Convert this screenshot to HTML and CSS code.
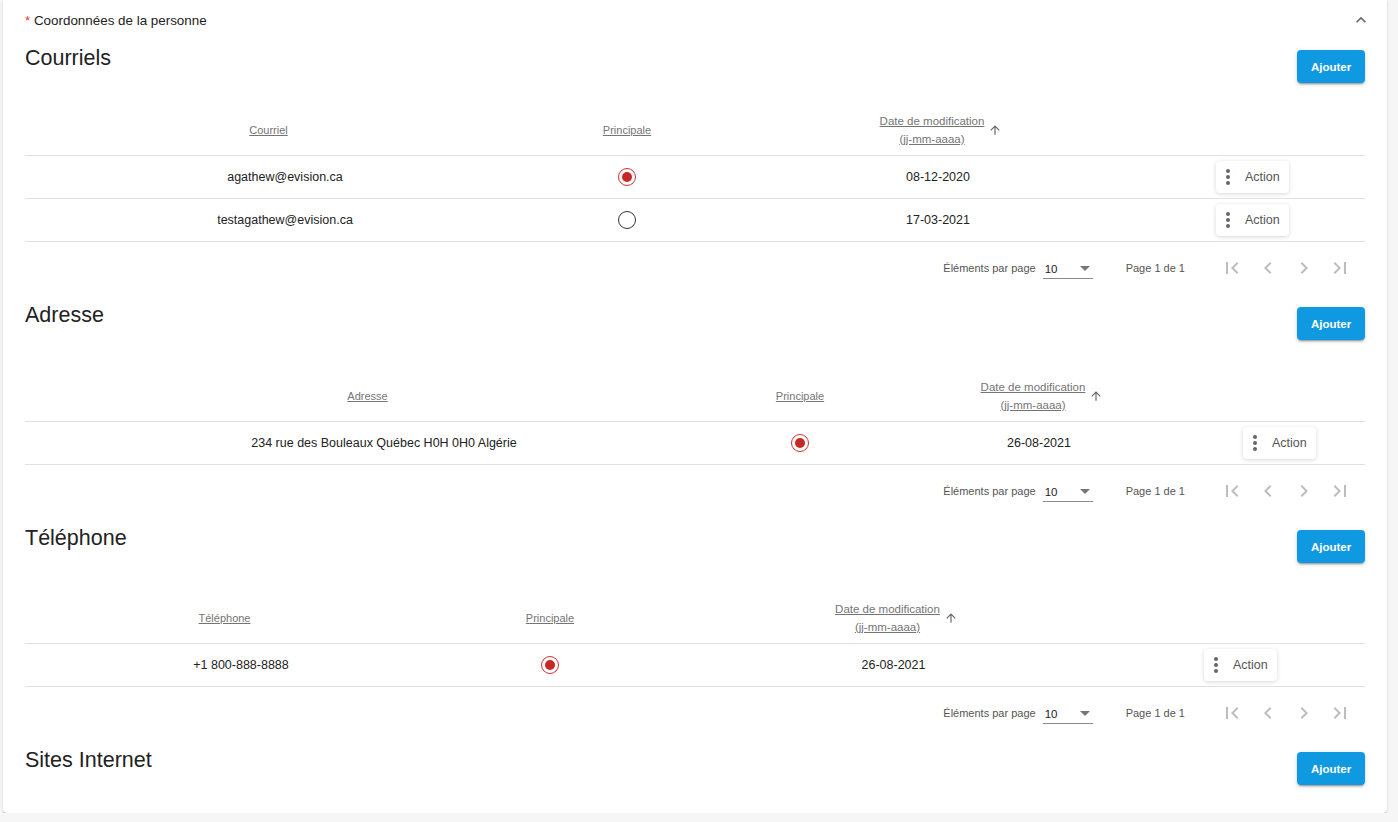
FILE: index.html
```html
<!DOCTYPE html>
<html lang="fr">
<head>
    <meta charset="UTF-8">
    <title>Coordonnées de la personne</title>
    <link rel="stylesheet" href="styles.css">
</head>
<body>

<div class="card">
    <!-- En-tête du panneau -->
    <div class="card-top">
        <span class="card-title"><span class="req">*</span> Coordonnées de la personne</span>
        <svg class="collapse-icon" viewBox="0 0 24 24"><path d="M12 8l-6 6 1.41 1.41L12 10.83l4.59 4.58L18 14z"/></svg>
    </div>

    <!-- Courriels -->
    <section class="section">
        <div class="section-head">
            <h2>Courriels</h2>
            <button class="btn-add">Ajouter</button>
        </div>
        <div class="tbl tbl-mail">
            <div class="tr th-row">
                <div class="th th-first"><span class="th-label">Courriel</span></div>
                <div class="th"><span class="th-label">Principale</span></div>
                <div class="th th-date">
                    <span class="th-label">Date de modification<br>(jj-mm-aaaa)</span>
                    <svg class="sort-icon" viewBox="0 0 24 24"><path d="M4 12l1.41 1.41L11 7.83V20h2V7.83l5.58 5.59L20 12l-8-8-8 8z"/></svg>
                </div>
                <div class="th"></div>
            </div>
            <div class="tr">
                <div class="td">agathew@evision.ca</div>
                <div class="td"><span class="radio checked"></span></div>
                <div class="td">08-12-2020</div>
                <div class="td td-action">
                    <button class="btn-action"><svg viewBox="0 0 24 24"><circle cx="12" cy="6" r="2"/><circle cx="12" cy="12" r="2"/><circle cx="12" cy="18" r="2"/></svg>Action</button>
                </div>
            </div>
            <div class="tr">
                <div class="td">testagathew@evision.ca</div>
                <div class="td"><span class="radio"></span></div>
                <div class="td">17-03-2021</div>
                <div class="td td-action">
                    <button class="btn-action"><svg viewBox="0 0 24 24"><circle cx="12" cy="6" r="2"/><circle cx="12" cy="12" r="2"/><circle cx="12" cy="18" r="2"/></svg>Action</button>
                </div>
            </div>
        </div>
        <div class="paginator">
            <span class="pg-label">Éléments par page</span>
            <div class="pg-select"><span>10</span><span class="caret"></span></div>
            <span class="pg-range">Page 1 de 1</span>
            <button class="pg-btn"><svg viewBox="0 0 24 24"><path d="M18.41 16.59L13.82 12l4.59-4.59L17 6l-6 6 6 6zM6 6h2v12H6z"/></svg></button>
            <button class="pg-btn"><svg viewBox="0 0 24 24"><path d="M15.41 7.41L14 6l-6 6 6 6 1.41-1.41L10.83 12z"/></svg></button>
            <button class="pg-btn"><svg viewBox="0 0 24 24"><path d="M10 6L8.59 7.41 13.17 12l-4.58 4.59L10 18l6-6z"/></svg></button>
            <button class="pg-btn"><svg viewBox="0 0 24 24"><path d="M5.59 7.41L10.18 12l-4.59 4.59L7 18l6-6-6-6zM16 6h2v12h-2z"/></svg></button>
        </div>
    </section>

    <!-- Adresse -->
    <section class="section">
        <div class="section-head">
            <h2>Adresse</h2>
            <button class="btn-add">Ajouter</button>
        </div>
        <div class="tbl tbl-addr">
            <div class="tr th-row">
                <div class="th th-first"><span class="th-label">Adresse</span></div>
                <div class="th"><span class="th-label">Principale</span></div>
                <div class="th th-date">
                    <span class="th-label">Date de modification<br>(jj-mm-aaaa)</span>
                    <svg class="sort-icon" viewBox="0 0 24 24"><path d="M4 12l1.41 1.41L11 7.83V20h2V7.83l5.58 5.59L20 12l-8-8-8 8z"/></svg>
                </div>
                <div class="th"></div>
            </div>
            <div class="tr">
                <div class="td">234 rue des Bouleaux Québec H0H 0H0 Algérie</div>
                <div class="td"><span class="radio checked"></span></div>
                <div class="td">26-08-2021</div>
                <div class="td td-action">
                    <button class="btn-action"><svg viewBox="0 0 24 24"><circle cx="12" cy="6" r="2"/><circle cx="12" cy="12" r="2"/><circle cx="12" cy="18" r="2"/></svg>Action</button>
                </div>
            </div>
        </div>
        <div class="paginator">
            <span class="pg-label">Éléments par page</span>
            <div class="pg-select"><span>10</span><span class="caret"></span></div>
            <span class="pg-range">Page 1 de 1</span>
            <button class="pg-btn"><svg viewBox="0 0 24 24"><path d="M18.41 16.59L13.82 12l4.59-4.59L17 6l-6 6 6 6zM6 6h2v12H6z"/></svg></button>
            <button class="pg-btn"><svg viewBox="0 0 24 24"><path d="M15.41 7.41L14 6l-6 6 6 6 1.41-1.41L10.83 12z"/></svg></button>
            <button class="pg-btn"><svg viewBox="0 0 24 24"><path d="M10 6L8.59 7.41 13.17 12l-4.58 4.59L10 18l6-6z"/></svg></button>
            <button class="pg-btn"><svg viewBox="0 0 24 24"><path d="M5.59 7.41L10.18 12l-4.59 4.59L7 18l6-6-6-6zM16 6h2v12h-2z"/></svg></button>
        </div>
    </section>

    <!-- Téléphone -->
    <section class="section">
        <div class="section-head">
            <h2>Téléphone</h2>
            <button class="btn-add">Ajouter</button>
        </div>
        <div class="tbl tbl-tel">
            <div class="tr th-row">
                <div class="th th-first"><span class="th-label">Téléphone</span></div>
                <div class="th"><span class="th-label">Principale</span></div>
                <div class="th th-date">
                    <span class="th-label">Date de modification<br>(jj-mm-aaaa)</span>
                    <svg class="sort-icon" viewBox="0 0 24 24"><path d="M4 12l1.41 1.41L11 7.83V20h2V7.83l5.58 5.59L20 12l-8-8-8 8z"/></svg>
                </div>
                <div class="th"></div>
            </div>
            <div class="tr">
                <div class="td">+1 800-888-8888</div>
                <div class="td"><span class="radio checked"></span></div>
                <div class="td">26-08-2021</div>
                <div class="td td-action">
                    <button class="btn-action"><svg viewBox="0 0 24 24"><circle cx="12" cy="6" r="2"/><circle cx="12" cy="12" r="2"/><circle cx="12" cy="18" r="2"/></svg>Action</button>
                </div>
            </div>
        </div>
        <div class="paginator">
            <span class="pg-label">Éléments par page</span>
            <div class="pg-select"><span>10</span><span class="caret"></span></div>
            <span class="pg-range">Page 1 de 1</span>
            <button class="pg-btn"><svg viewBox="0 0 24 24"><path d="M18.41 16.59L13.82 12l4.59-4.59L17 6l-6 6 6 6zM6 6h2v12H6z"/></svg></button>
            <button class="pg-btn"><svg viewBox="0 0 24 24"><path d="M15.41 7.41L14 6l-6 6 6 6 1.41-1.41L10.83 12z"/></svg></button>
            <button class="pg-btn"><svg viewBox="0 0 24 24"><path d="M10 6L8.59 7.41 13.17 12l-4.58 4.59L10 18l6-6z"/></svg></button>
            <button class="pg-btn"><svg viewBox="0 0 24 24"><path d="M5.59 7.41L10.18 12l-4.59 4.59L7 18l6-6-6-6zM16 6h2v12h-2z"/></svg></button>
        </div>
    </section>

    <!-- Sites Internet -->
    <section class="section section-last">
        <div class="section-head">
            <h2>Sites Internet</h2>
            <button class="btn-add">Ajouter</button>
        </div>
    </section>
</div>

</body>
</html>
```

FILE: styles.css
```css
body {
    font-family: "Liberation Sans", Arial, sans-serif;
    background-color: #f6f6f6;
    color: #222;
    margin: 0;
    padding: 0;
}
.card {
    width: 1384px;
    margin-left: 3px;
    box-sizing: border-box;
    padding: 0 22px 28px;
    background-color: #fff;
    border-radius: 0 0 4px 4px;
    box-shadow: 0 2px 1px -1px rgba(0,0,0,.2), 0 1px 1px 0 rgba(0,0,0,.14), 0 1px 3px 0 rgba(0,0,0,.12);
}
.card-top {
    height: 40px;
    display: flex;
    align-items: center;
    justify-content: space-between;
}
.card-title {
    font-size: 13.4px;
    color: #222;
}
.req {
    color: #e53935;
}
.collapse-icon {
    width: 20px;
    height: 20px;
    fill: #666;
    margin-right: -6px;
}

/* sections */
.section {
    margin-top: 10px;
}
.section + .section {
    margin-top: 13px;
}
.section-head {
    display: flex;
    justify-content: space-between;
    align-items: flex-start;
}
.section-head h2 {
    margin: 0;
    font-size: 21.5px;
    font-weight: normal;
    line-height: 17px;
    color: #222;
}
.btn-add {
    width: 68px;
    height: 33px;
    border: none;
    border-radius: 4px;
    background-color: #0f99e0;
    color: #fff;
    font-family: inherit;
    font-size: 11.5px;
    font-weight: bold;
    box-shadow: 0 3px 1px -2px rgba(0,0,0,.2), 0 2px 2px 0 rgba(0,0,0,.14), 0 1px 5px 0 rgba(0,0,0,.12);
}

/* tables */
.tbl {
    margin-top: 31px;
}
.tbl-mail {
    margin-top: 22px;
}
.tbl-tel {
    margin-top: 30px;
}
.tr {
    display: grid;
    height: 43px;
    box-sizing: border-box;
    border-bottom: 1px solid #e0e0e0;
}
.tbl-mail .tr {
    grid-template-columns: 520px 164px 458px 1fr;
}
.tbl-addr .tr {
    grid-template-columns: 718px 114px 364px 1fr;
}
.tbl-tel .tr {
    grid-template-columns: 432px 186px 501px 1fr;
}
.th-row {
    height: 51px;
}
.th, .td {
    display: flex;
    align-items: center;
    justify-content: center;
}
.th-first {
    padding-right: 33px;
}
.th-date {
    padding-left: 6px;
}
.th-label {
    font-size: 11px;
    line-height: 18px;
    color: #757575;
    text-decoration: underline;
    text-align: center;
}
.th-date .th-label {
    font-size: 11.5px;
}
.sort-icon {
    width: 14px;
    height: 14px;
    fill: #666;
    margin-left: 4px;
}
.td {
    font-size: 12.5px;
    color: #222;
}
.td-action {
    justify-content: flex-start;
}
.tbl-mail .td-action {
    padding-left: 49px;
}
.tbl-addr .td-action {
    padding-left: 22px;
}
.tbl-tel .td-action {
    padding-left: 60px;
}
.btn-action {
    display: flex;
    align-items: center;
    height: 32px;
    padding: 0 9px 0 0;
    border: none;
    border-radius: 4px;
    background-color: #fff;
    color: #555;
    font-family: inherit;
    font-size: 12.5px;
    box-shadow: 0 1px 4px rgba(0,0,0,.16);
}
.btn-action svg {
    width: 24px;
    height: 24px;
    fill: #666;
    margin-right: 5px;
}
.radio {
    width: 18px;
    height: 18px;
    box-sizing: border-box;
    border: 1.5px solid #333;
    border-radius: 50%;
    display: flex;
    align-items: center;
    justify-content: center;
}
.radio.checked {
    border-color: #d32f2f;
}
.radio.checked::after {
    content: "";
    width: 10px;
    height: 10px;
    border-radius: 50%;
    background-color: #c62828;
}

/* pagination */
.paginator {
    height: 52px;
    display: flex;
    align-items: center;
    justify-content: flex-end;
    padding-right: 7px;
    font-size: 11px;
    color: #555;
}
.pg-label {
    margin-right: 7px;
}
.pg-select {
    width: 50px;
    height: 20px;
    box-sizing: border-box;
    padding: 0 3px 0 2px;
    margin-top: 2px;
    border-bottom: 1px solid #8a8a8a;
    display: flex;
    align-items: center;
    justify-content: space-between;
    font-size: 11.5px;
    color: #222;
    margin-right: 33px;
}
.caret {
    width: 0;
    height: 0;
    border-left: 5px solid transparent;
    border-right: 5px solid transparent;
    border-top: 5px solid #777;
}
.pg-range {
    margin-right: 29px;
}
.pg-btn {
    width: 36px;
    height: 36px;
    padding: 0;
    border: none;
    background: none;
    display: flex;
    align-items: center;
    justify-content: center;
}
.pg-btn svg {
    width: 24px;
    height: 24px;
    fill: #bdbdbd;
}
```
